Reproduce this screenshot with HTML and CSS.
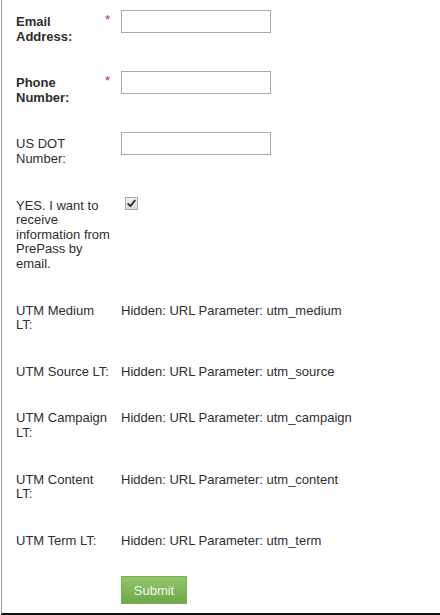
FILE: index.html
```html
<!DOCTYPE html>
<html>
<head>
<meta charset="utf-8">
<link rel="stylesheet" href="styles.css">
</head>
<body>
<div class="page">
  <form class="form">
    <div class="row">
      <label class="label req"><span class="ast">*</span>Email Address:</label>
      <div class="field"><input class="text" type="text"></div>
    </div>
    <div class="row">
      <label class="label req"><span class="ast">*</span>Phone Number:</label>
      <div class="field"><input class="text" type="text"></div>
    </div>
    <div class="row">
      <label class="label">US DOT Number:</label>
      <div class="field"><input class="text" type="text"></div>
    </div>
    <div class="row">
      <label class="label">YES. I want to receive information from PrePass by email.</label>
      <div class="field">
        <span class="check"><svg width="13" height="13" viewBox="0 0 13 13"><path d="M3.2 6.8 L5.4 9.2 L9.8 3.6" fill="none" stroke="#333" stroke-width="1.9" stroke-linecap="round" stroke-linejoin="round"/></svg></span>
      </div>
    </div>
    <div class="row">
      <label class="label">UTM Medium LT:</label>
      <div class="field hidden">Hidden: URL Parameter: utm_medium</div>
    </div>
    <div class="row">
      <label class="label">UTM Source LT:</label>
      <div class="field hidden">Hidden: URL Parameter: utm_source</div>
    </div>
    <div class="row">
      <label class="label">UTM Campaign LT:</label>
      <div class="field hidden">Hidden: URL Parameter: utm_campaign</div>
    </div>
    <div class="row">
      <label class="label">UTM Content LT:</label>
      <div class="field hidden">Hidden: URL Parameter: utm_content</div>
    </div>
    <div class="row">
      <label class="label">UTM Term LT:</label>
      <div class="field hidden">Hidden: URL Parameter: utm_term</div>
    </div>
    <div class="row buttons">
      <button class="submit" type="button">Submit</button>
    </div>
  </form>
</div>
</body>
</html>
```
FILE: styles.css
```css
html, body {
  margin: 0;
  padding: 0;
  background: #fff;
}
.page {
  box-sizing: border-box;
  height: 615px;
  margin-left: 1px;
  border-left: 1px solid #9a9a9a;
  border-bottom: 2px solid #111;
  font-family: "Liberation Sans", Arial, sans-serif;
  font-size: 13px;
  line-height: 14.6px;
  color: #2e2e2e;
}
.form {
  padding: 11px 0 0 14px;
}
.row {
  display: flex;
  gap: 8px;
  margin-bottom: 28px;
}
.label {
  width: 97px;
  flex: none;
  padding-top: 4px;
}
.label.req {
  font-weight: bold;
}
.ast {
  float: right;
  color: #b0372a;
  font-weight: normal;
  padding-left: 5px;
  margin-top: -2px;
  margin-right: 3px;
}
.field {
  flex: none;
}
.field.hidden {
  padding-top: 4px;
}
.text {
  box-sizing: border-box;
  display: block;
  width: 150px;
  height: 23px;
  margin: -1px 0 0 0;
  border: 1px solid #a9a9a9;
  background: #fff;
}
.check {
  display: block;
  box-sizing: border-box;
  width: 13px;
  height: 13px;
  margin: 2px 0 0 4px;
  border: 1px solid #a8a8a8;
  background: linear-gradient(#f4f4f4, #dcdcdc);
  position: relative;
}
.check svg {
  position: absolute;
  left: -1px;
  top: -1px;
}
.buttons {
  padding-left: 105px;
}
.submit {
  box-sizing: border-box;
  width: 66px;
  height: 28px;
  margin: 0;
  padding: 0;
  border: 1px solid #78ad52;
  background: linear-gradient(#93c66e, #6ea847);
  color: #f3f9ee;
  font-family: "Liberation Sans", Arial, sans-serif;
  font-size: 13px;
}
```
